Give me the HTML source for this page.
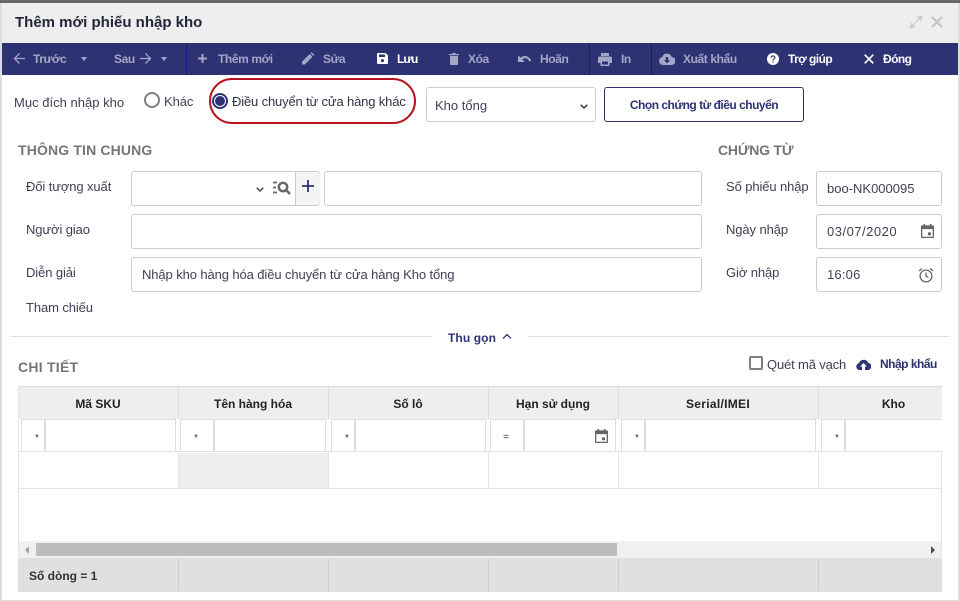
<!DOCTYPE html>
<html lang="vi"><head><meta charset="utf-8"><title>Thêm mới phiếu nhập kho</title>
<style>
html,body{margin:0;padding:0;background:#fff}
#p{position:relative;width:960px;height:601px;overflow:hidden;background:#fff;font-family:"Liberation Sans","Noto Sans CJK SC",sans-serif;font-size:13px;color:#33334d}
#p div,#p svg{position:absolute}
.t{white-space:nowrap;line-height:16px}
.b{font-weight:700}
.m{color:#a5a7c6;font-size:12px;font-weight:700;letter-spacing:-.4px}
.w{color:#fff;font-size:12px;font-weight:700;letter-spacing:-.55px}
.i{border:1px solid #ccc;border-radius:3px;background:#fff;box-sizing:border-box}
.h{color:#757575;font-weight:700;font-size:14px}
.l{color:#404055;font-size:13px;letter-spacing:-.1px}
.c{color:#222;font-size:12px;font-weight:700;text-align:center}
.f{background:#fff;border:1px solid #ddd;box-sizing:border-box}
.v{width:1px;background:#e4e4e4}
.s{font-size:10px;color:#333;text-align:center;width:10px}
</style></head><body><div id="p">
<div style="left:0;top:0;width:960px;height:3px;background:#666"></div>
<div style="left:0;top:3px;width:2px;height:598px;background:#ddd"></div>
<div style="left:958px;top:3px;width:2px;height:598px;background:#ddd"></div>
<div style="left:0;top:600px;width:960px;height:1px;background:#ddd"></div>
<div style="left:2px;top:3px;width:956px;height:40px;background:#eee"></div>
<div class="t b" style="left:15px;top:15px;font-size:15px;color:#22263a">Thêm mới phiếu nhập kho</div>
<svg style="left:909px;top:15px" width="14" height="14" viewBox="0 0 14 14"><path d="M1 13l4.500-1-3.500-3.500zM13 1L8.500 2l3.500 3.500zM4 10l6-6" fill="#ccc" stroke="#ccc"/></svg>
<svg style="left:931px;top:16px" width="12" height="12" viewBox="0 0 12 12"><path d="M1 1l10 10M11 1L1 11" stroke="#c4c4c4" stroke-width="2.200"/></svg>

<div style="left:2px;top:43px;width:956px;height:32px;background:#2d3272"></div>
<div style="left:186px;top:43px;width:1px;height:32px;background:#1a1580"></div>
<div style="left:589px;top:43px;width:1px;height:32px;background:#1a1580"></div>
<div style="left:651px;top:43px;width:1px;height:32px;background:#1a1580"></div>
<svg style="left:13px;top:52px" width="13" height="13" viewBox="0 0 13 13"><path d="M12 6.500H2M6.500 1.500l-5 5 5 5" fill="none" stroke="#a5a7c6" stroke-width="1.300"/></svg>
<div class="t m" style="left:33px;top:51px">Trước</div>
<svg style="left:80px;top:57px" width="8" height="4"><path d="M1 0h6L4 4z" fill="#a5a7c6"/></svg>
<div class="t m" style="left:114px;top:51px">Sau</div>
<svg style="left:139px;top:52px" width="13" height="13" viewBox="0 0 13 13"><path d="M1 6.500h10M6.500 1.500l5 5-5 5" fill="none" stroke="#a5a7c6" stroke-width="1.300"/></svg>
<svg style="left:160px;top:57px" width="8" height="4"><path d="M1 0h6L4 4z" fill="#a5a7c6"/></svg>
<svg style="left:197px;top:53px" width="11" height="11"><path d="M5.500 1v9M1 5.500h9" stroke="#a5a7c6" stroke-width="2"/></svg>
<div class="t m" style="left:218px;top:51px">Thêm mới</div>
<svg style="left:301px;top:52px" width="13" height="13" viewBox="0 0 13 13"><path d="M1 12.500V9.700L8.700 2l2.800 2.800L3.800 12.500zM9.500 1.200l1-1 2.800 2.800-1 1z" fill="#a5a7c6"/></svg>
<div class="t m" style="left:323px;top:51px">Sửa</div>
<svg style="left:377px;top:53px" width="11" height="11" viewBox="0 0 11 11"><path fill-rule="evenodd" d="M0 1a1 1 0 0 1 1-1h7.500L11 2.500V10a1 1 0 0 1-1 1H1a1 1 0 0 1-1-1zM2 1.500v2.500h6V1.500zM5.500 6a1.600 1.600 0 1 0 .01 0z" fill="#fff"/></svg>
<div class="t w" style="left:397px;top:51px;letter-spacing:-1px">Lưu</div>
<svg style="left:449px;top:53px" width="10" height="12" viewBox="0 0 10 12"><path d="M1 3h8v8a1 1 0 0 1-1 1H2a1 1 0 0 1-1-1zM0 1h3l.5-1h3l.5 1h3v1.300H0z" fill="#a5a7c6"/></svg>
<div class="t m" style="left:468px;top:51px">Xóa</div>
<svg style="left:518px;top:54px" width="14" height="9" viewBox="0 0 14 9"><path d="M7 2C5 2 3.400 2.800 2.500 3.700L0 1.200V8h6.800L4.200 5.400C5 4.700 6 4.200 7 4.200c2 0 3.700 1.300 4.400 3.300l1.900-.6C12.200 4 9.800 2 7 2z" fill="#a5a7c6"/></svg>
<div class="t m" style="left:540px;top:51px">Hoãn</div>
<svg style="left:598px;top:53px" width="14" height="13" viewBox="0 0 14 13"><path fill-rule="evenodd" d="M3 0h8v3H3zM2 3.500h10a2 2 0 0 1 2 2V10h-2.500v3h-9v-3H0V5.500a2 2 0 0 1 2-2zM4 8.500v3h6v-3z" fill="#a5a7c6"/></svg>
<div class="t m" style="left:621px;top:51px">In</div>
<svg style="left:659px;top:53px" width="16" height="12" viewBox="0 0 16 12"><path fill-rule="evenodd" d="M4 12a4 4 0 0 1-.8-7.900A5 5 0 0 1 12.700 4 4 4 0 0 1 12.500 12zM6.800 4v3.200H4.800L8 10.300l3.200-3.100H9.200V4z" fill="#a5a7c6"/></svg>
<div class="t m" style="left:683px;top:51px">Xuất khẩu</div>
<svg style="left:767px;top:53px" width="12" height="12" viewBox="0 0 12 12"><circle cx="6" cy="6" r="6" fill="#fff"/><path d="M4.200 4.700c0-2.300 3.700-2.300 3.700-.2 0 1.400-1.900 1.500-1.900 3" fill="none" stroke="#2d3272" stroke-width="1.200"/><rect x="5.400" y="8.400" width="1.200" height="1.200" fill="#2d3272"/></svg>
<div class="t w" style="left:788px;top:51px">Trợ giúp</div>
<svg style="left:864px;top:54px" width="10" height="10"><path d="M.7.700l8.600 8.600M9.300.700L.7 9.300" stroke="#fff" stroke-width="1.700"/></svg>
<div class="t w" style="left:883px;top:51px">Đóng</div>

<div class="t l" style="left:14px;top:95px;letter-spacing:.02px">Mục đích nhập kho</div>
<div style="left:144px;top:92px;width:16px;height:16px;box-sizing:border-box;border:2px solid #808080;border-radius:50%"></div>
<div class="t l" style="left:164px;top:94px">Khác</div>
<div style="left:209px;top:78px;width:207px;height:46px;box-sizing:border-box;border:2px solid #b8141e;border-radius:23px"></div>
<div style="left:212px;top:93px;width:16px;height:16px;box-sizing:border-box;border:2px solid #2d3272;border-radius:50%"></div>
<div style="left:215px;top:96px;width:10px;height:10px;background:#2d3272;border-radius:50%"></div>
<div class="t" style="left:232px;top:94px;color:#333348;font-size:13px;letter-spacing:-.15px">Điều chuyển từ cửa hàng khác</div>
<div class="i" style="left:426px;top:87px;width:170px;height:35px"></div>
<div class="t l" style="left:435px;top:98px;letter-spacing:0">Kho tổng</div>
<svg style="left:580px;top:104px" width="8" height="5"><path d="M.7.700L4 4 7.300.700" fill="none" stroke="#333" stroke-width="1.400"/></svg>
<div class="i" style="left:604px;top:87px;width:200px;height:35px;border-color:#2d3272"></div>
<div class="t" style="left:604px;top:97px;width:200px;text-align:center;font-size:12px;font-weight:700;color:#2d3272;letter-spacing:-.5px">Chọn chứng từ điều chuyển</div>

<div class="t h" style="left:18px;top:142px;letter-spacing:.15px">THÔNG TIN CHUNG</div>
<div class="t h" style="left:718px;top:142px;letter-spacing:-.2px">CHỨNG TỪ</div>
<div class="t l" style="left:26px;top:179px">Đối tượng xuất</div>
<div class="t l" style="left:26px;top:222px">Người giao</div>
<div class="t l" style="left:26px;top:265px">Diễn giải</div>
<div class="t l" style="left:26px;top:300px">Tham chiếu</div>
<div class="i" style="left:131px;top:171px;width:189px;height:35px"></div>
<div style="left:295px;top:172px;width:24px;height:33px;background:#f4f4f4;border-left:1px solid #ccc;border-radius:0 3px 3px 0"></div>
<svg style="left:256px;top:187px" width="8" height="5"><path d="M.7.700L4 4 7.300.700" fill="none" stroke="#333" stroke-width="1.300"/></svg>
<svg style="left:273px;top:181px" width="19" height="15" viewBox="0 0 19 15"><path d="M0 1.500h4M0 6.500h3M0 11.500h4" stroke="#666" stroke-width="1.800"/><circle cx="10" cy="6" r="4.200" fill="none" stroke="#666" stroke-width="2.400"/><path d="M13 9l4 4" stroke="#666" stroke-width="2.400"/></svg>
<svg style="left:302px;top:180px" width="12" height="12"><path d="M6 0v12M0 6h12" stroke="#2d3272" stroke-width="1.800"/></svg>
<div class="i" style="left:324px;top:171px;width:378px;height:35px"></div>
<div class="i" style="left:131px;top:214px;width:571px;height:35px"></div>
<div class="i" style="left:131px;top:257px;width:571px;height:35px"></div>
<div class="t l" style="left:142px;top:267px">Nhập kho hàng hóa điều chuyển từ cửa hàng Kho tổng</div>

<div class="t l" style="left:726px;top:179px">Số phiếu nhập</div>
<div class="t l" style="left:726px;top:222px">Ngày nhập</div>
<div class="t l" style="left:726px;top:265px">Giờ nhập</div>
<div class="i" style="left:816px;top:171px;width:126px;height:35px"></div>
<div class="i" style="left:816px;top:214px;width:126px;height:35px"></div>
<div class="i" style="left:816px;top:257px;width:126px;height:35px"></div>
<div class="t l" style="left:827px;top:181px;letter-spacing:0">boo-NK000095</div>
<div class="t l" style="left:827px;top:224px;letter-spacing:.5px">03/07/2020</div>
<div class="t l" style="left:827px;top:267px;letter-spacing:.2px">16:06</div>
<svg style="left:921px;top:224px" width="13" height="14" viewBox="0 0 13 15" preserveAspectRatio="none"><path fill-rule="evenodd" d="M0 2.500a1 1 0 0 1 1-1h1.500V0h1.700v1.500h4.600V0h1.700v1.500H12a1 1 0 0 1 1 1V14a1 1 0 0 1-1 1H1a1 1 0 0 1-1-1zM1.300 5.500V13.700h10.400V5.500zM7 9h3v3H7z" fill="#666"/></svg>
<svg style="left:918px;top:267px" width="16" height="16" viewBox="0 0 16 16"><circle cx="8" cy="9" r="5.900" fill="none" stroke="#666" stroke-width="1.300"/><path d="M8 5.500V9l2.500 1.500M1 4l3-2.500M15 4l-3-2.500" fill="none" stroke="#666" stroke-width="1.300"/></svg>

<div style="left:10px;top:336px;width:422px;height:1px;background:#e2e2e2"></div>
<div style="left:528px;top:336px;width:422px;height:1px;background:#e2e2e2"></div>
<div class="t b" style="left:448px;top:330px;font-size:12px;color:#2d3272;letter-spacing:.1px">Thu gọn</div>
<svg style="left:502px;top:333px" width="10" height="7"><path d="M1 5.500l4-4 4 4" fill="none" stroke="#2d3272" stroke-width="1.300"/></svg>

<div class="t h" style="left:18px;top:359px;letter-spacing:.25px">CHI TIẾT</div>
<div style="left:749px;top:356px;width:14px;height:14px;box-sizing:border-box;border:2px solid #808080;border-radius:2px"></div>
<div class="t l" style="left:767px;top:357px;font-size:13px;letter-spacing:-.15px">Quét mã vạch</div>
<svg style="left:856px;top:359px" width="15" height="11" viewBox="0 0 15 11"><path fill-rule="evenodd" d="M3.500 11a3.500 3.500 0 0 1-.5-6.900A4.800 4.800 0 0 1 12 3.800 3.600 3.600 0 0 1 11.500 11H9V7.500h2L7.500 4 4 7.500h2V11z" fill="#2d3272"/></svg>
<div class="t b" style="left:880px;top:356px;font-size:12px;color:#2d3272;letter-spacing:-.5px">Nhập khẩu</div>

<div style="left:18px;top:386px;width:924px;height:33px;background:#eee;border-top:1px solid #ddd;box-sizing:border-box"></div>
<div style="left:18px;top:386px;width:1px;height:172px;background:#e4e4e4"></div>
<div style="left:941px;top:452px;width:1px;height:106px;background:#e4e4e4"></div>
<div style="left:178px;top:386px;width:1px;height:33px;background:#ddd"></div>
<div style="left:328px;top:386px;width:1px;height:33px;background:#ddd"></div>
<div style="left:488px;top:386px;width:1px;height:33px;background:#ddd"></div>
<div style="left:618px;top:386px;width:1px;height:33px;background:#ddd"></div>
<div style="left:818px;top:386px;width:1px;height:33px;background:#ddd"></div>
<div class="t c" style="left:18px;top:396px;width:160px">Mã SKU</div>
<div class="t c" style="left:178px;top:396px;width:150px">Tên hàng hóa</div>
<div class="t c" style="left:328px;top:396px;width:160px">Số lô</div>
<div class="t c" style="left:488px;top:396px;width:130px">Hạn sử dụng</div>
<div class="t c" style="left:618px;top:396px;width:200px;letter-spacing:.3px">Serial/IMEI</div>
<div class="t c" style="left:818px;top:396px;width:151px">Kho</div>

<div class="f" style="left:21px;top:419px;width:24px;height:33px"></div><div class="f" style="left:45px;top:419px;width:131px;height:33px"></div>
<div class="f" style="left:180px;top:419px;width:34px;height:33px"></div><div class="f" style="left:214px;top:419px;width:112px;height:33px"></div>
<div class="f" style="left:331px;top:419px;width:24px;height:33px"></div><div class="f" style="left:355px;top:419px;width:131px;height:33px"></div>
<div class="f" style="left:490px;top:419px;width:34px;height:33px"></div><div class="f" style="left:524px;top:419px;width:92px;height:33px"></div>
<div class="f" style="left:621px;top:419px;width:24px;height:33px"></div><div class="f" style="left:645px;top:419px;width:171px;height:33px"></div>
<div class="f" style="left:821px;top:419px;width:24px;height:33px"></div><div class="f" style="left:845px;top:419px;width:97px;height:33px;border-right:0"></div>
<div class="t s" style="left:32px;top:431px">*</div>
<div class="t s" style="left:191px;top:431px">*</div>
<div class="t s" style="left:342px;top:431px">*</div>
<div class="t s" style="left:501px;top:430px">=</div>
<div class="t s" style="left:632px;top:431px">*</div>
<div class="t s" style="left:832px;top:431px">*</div>
<svg style="left:595px;top:429px" width="13" height="14" viewBox="0 0 13 15" preserveAspectRatio="none"><path fill-rule="evenodd" d="M0 2.500a1 1 0 0 1 1-1h1.500V0h1.700v1.500h4.600V0h1.700v1.500H12a1 1 0 0 1 1 1V14a1 1 0 0 1-1 1H1a1 1 0 0 1-1-1zM1.300 5.500V13.700h10.400V5.500zM7 9h3v3H7z" fill="#666"/></svg>

<div style="left:179px;top:453px;width:149px;height:35px;background:#eee"></div>
<div style="left:18px;top:451px;width:924px;height:1px;background:#e2e2e2"></div>
<div style="left:18px;top:488px;width:924px;height:1px;background:#e4e4e4"></div>
<div class="v" style="left:178px;top:452px;height:36px"></div>
<div class="v" style="left:328px;top:452px;height:36px"></div>
<div class="v" style="left:488px;top:452px;height:36px"></div>
<div class="v" style="left:618px;top:452px;height:36px"></div>
<div class="v" style="left:818px;top:452px;height:36px"></div>

<div style="left:19px;top:541px;width:922px;height:17px;background:#f0f0f0"></div>
<div style="left:36px;top:543px;width:581px;height:13px;background:#bdbdbd"></div>
<svg style="left:24px;top:546px" width="6" height="8"><path d="M5 0v8L1 4z" fill="#a3a3a3"/></svg>
<svg style="left:930px;top:546px" width="6" height="8"><path d="M1 0v8l4-4z" fill="#505050"/></svg>

<div style="left:18px;top:558px;width:924px;height:34px;background:#e0e0e0"></div>
<div style="left:178px;top:559px;width:1px;height:32px;background:#ccc"></div>
<div style="left:328px;top:559px;width:1px;height:32px;background:#ccc"></div>
<div style="left:488px;top:559px;width:1px;height:32px;background:#ccc"></div>
<div style="left:618px;top:559px;width:1px;height:32px;background:#ccc"></div>
<div style="left:818px;top:559px;width:1px;height:32px;background:#ccc"></div>
<div class="t" style="left:29px;top:568px;font-size:12px;font-weight:700;color:#333">Số dòng = 1</div>
</div></body></html>
